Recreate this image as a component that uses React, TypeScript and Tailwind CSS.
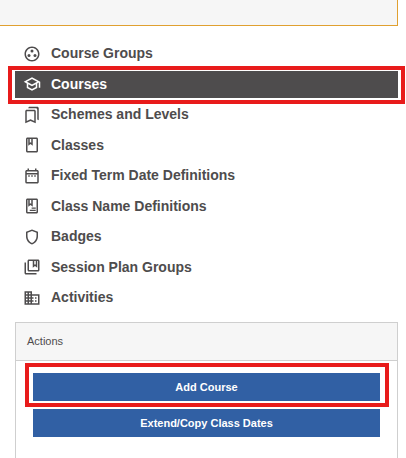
import type { ComponentType, SVGProps } from 'react';
import {
  MdOutlineBookmarks,
  MdOutlineClass,
  MdOutlineCollectionsBookmark,
  MdOutlineDateRange,
  MdOutlineDomain,
  MdOutlineGroupWork,
  MdOutlineSchool,
  MdOutlineShield,
} from 'react-icons/md';
import { clsx } from 'clsx';

interface NavItem {
  label: string;
  icon: ComponentType<{ className?: string }>;
  active?: boolean;
}

// Book with a bookmark and text lines on the cover
function ClassNameIcon(props: SVGProps<SVGSVGElement>) {
  return (
    <svg viewBox="0 0 24 24" fill="currentColor" aria-hidden="true" {...props}>
      <path d="M18 2H6c-1.1 0-2 .9-2 2v16c0 1.1.9 2 2 2h12c1.1 0 2-.9 2-2V4c0-1.1-.9-2-2-2zM9 4h2v5l-1-.75L9 9V4zm9 16H6V4h1v9l3-2.25L13 13V4h5v16z" />
      <path d="M11.500 14H17v1.700h-5.500zM9 17h8v1.700H9z" />
    </svg>
  );
}

const navItems: NavItem[] = [
  { label: 'Course Groups', icon: MdOutlineGroupWork },
  { label: 'Courses', icon: MdOutlineSchool, active: true },
  { label: 'Schemes and Levels', icon: MdOutlineBookmarks },
  { label: 'Classes', icon: MdOutlineClass },
  { label: 'Fixed Term Date Definitions', icon: MdOutlineDateRange },
  { label: 'Class Name Definitions', icon: ClassNameIcon },
  { label: 'Badges', icon: MdOutlineShield },
  { label: 'Session Plan Groups', icon: MdOutlineCollectionsBookmark },
  { label: 'Activities', icon: MdOutlineDomain },
];

function SideNav() {
  return (
    <nav className="ml-[15px] mr-2 mt-[14px]">
      <ul className="flex min-h-[271px] flex-col justify-between">
        {navItems.map(({ label, icon: Icon, active }) => (
          <li key={label} className="relative">
            <a
              href="#"
              className={clsx(
                'flex h-[27px] items-center gap-[10px] pl-2 text-[14px] font-bold',
                active ? 'bg-[#4e4c4d] text-white' : 'text-[#4e4c4d]'
              )}
            >
              <Icon className="size-[18px]" />
              {label}
            </a>
            {/* Highlight frame */}
            {active && (
              <span className="pointer-events-none absolute -bottom-[6px] -left-[7px] -right-[7px] -top-[5px] border-4 border-[#e81b1b]" />
            )}
          </li>
        ))}
      </ul>
    </nav>
  );
}

function ActionsPanel() {
  return (
    <section className="ml-[15px] mr-2 mt-[11px] flex-1 border border-b-0 border-[#cfcfcf]">
      <h2 className="border-b border-[#cfcfcf] bg-[#f6f6f6] px-[11px] py-[10px] text-[11px] leading-[17px] text-[#4e4c4d]">
        Actions
      </h2>
      <div className="flex flex-col gap-2 px-[17px] pt-3">
        <div className="relative flex">
          <button type="button" className="h-7 flex-1 bg-[#3160a4] text-[11px] font-bold text-white">
            Add Course
          </button>
          <span className="pointer-events-none absolute -bottom-[6px] -left-2 -right-[9px] -top-[10px] border-4 border-[#e81b1b]" />
        </div>
        <button type="button" className="h-7 bg-[#3160a4] text-[11px] font-bold text-white">
          Extend/Copy Class Dates
        </button>
      </div>
    </section>
  );
}

export default function App() {
  return (
    <div className="flex min-h-screen flex-col overflow-hidden bg-white font-['Liberation_Sans',Arial,sans-serif]">
      <div className="mr-2 h-[26px] border-b border-r border-[#e0a030] bg-[#f6f6f6]" />
      <SideNav />
      <ActionsPanel />
    </div>
  );
}
